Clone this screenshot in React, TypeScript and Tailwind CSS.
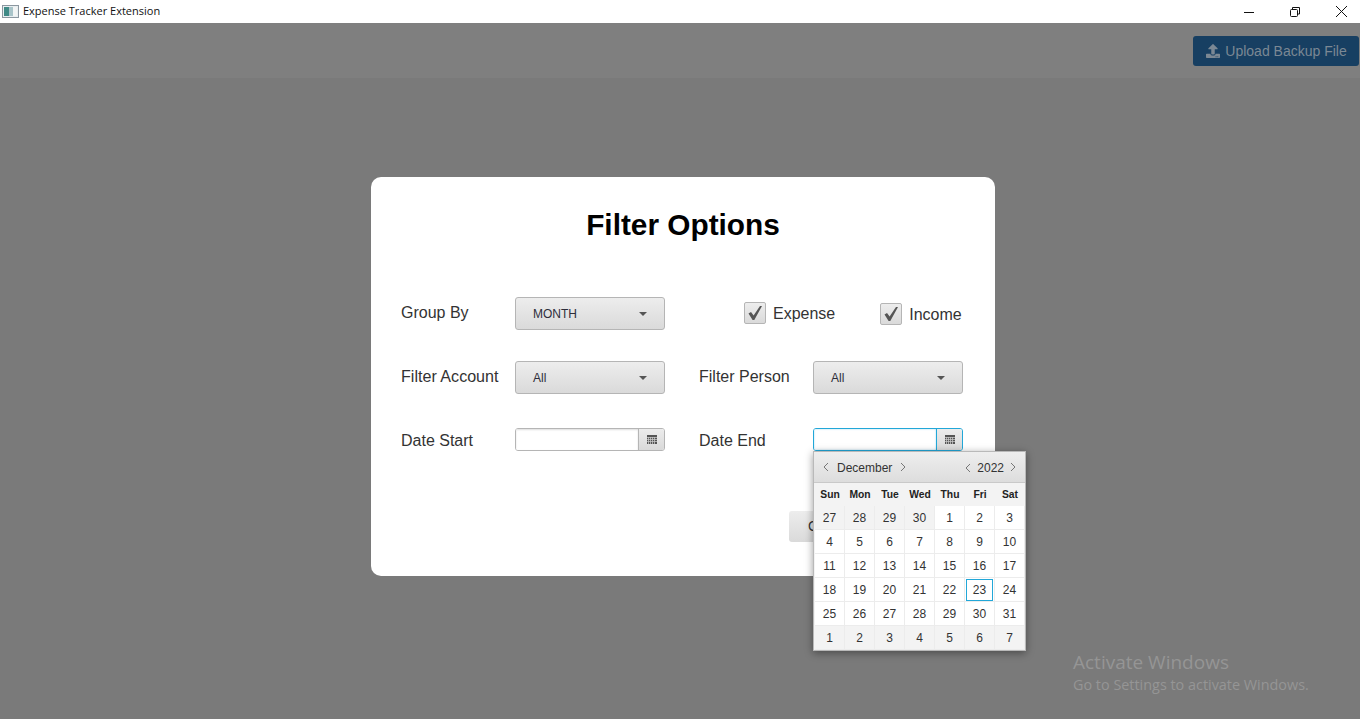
import { FaUpload } from "react-icons/fa";

const FONT = "font-['Liberation_Sans',Arial,sans-serif]";

function TitleBar() {
  return (
    <div className="flex h-[23px] items-center bg-white">
      <svg width="18" height="14" viewBox="0 0 18 14" className="ml-[2px]">
        <rect x="0.5" y="0.5" width="16" height="12" fill="#e8eef0" stroke="#8c97a0" />
        <rect x="2" y="2" width="5" height="9" fill="#3f8a86" />
        <rect x="7" y="2" width="4" height="9" fill="#a9c4c9" />
        <rect x="11" y="2" width="4" height="9" fill="#f2f4f4" />
      </svg>
      <span className="ml-[3px] font-['Open_Sans',sans-serif] text-[11px] text-[#111]">Expense Tracker Extension</span>
      <div className="ml-auto flex items-center">
        <svg width="12" height="12" viewBox="0 0 12 12" className="mr-[34px]"><path d="M1 6.5h10" stroke="#111" /></svg>
        <svg width="12" height="12" viewBox="0 0 12 12" className="mr-[34px]" fill="none" stroke="#111"><path d="M3.5 3V1.5h7V8H9" /><rect x="1.5" y="3.5" width="7" height="7" rx="1" /></svg>
        <svg width="13" height="13" viewBox="0 0 13 13" className="mr-[12px]"><path d="M1 1l11 11M12 1L1 12" stroke="#111" /></svg>
      </div>
    </div>
  );
}

function Select({ text }: { text: string }) {
  return (
    <div className="flex h-[33px] w-[150px] items-center rounded-[3px] border border-[#b5b5b5] bg-gradient-to-b from-[#ededed] to-[#dadada] pl-[17px] pr-[17px] text-[12px] text-[#2d2d3a]">
      <span>{text}</span>
      <span className="ml-auto h-0 w-0 border-x-[4px] border-t-[4px] border-x-transparent border-t-[#555]" />
    </div>
  );
}

function CalIcon() {
  return (
    <svg width="10" height="9" viewBox="0 0 10 9" shapeRendering="crispEdges">
      <rect width="10" height="9" fill="#555" />
      <path d="M0 2.5h10M0 4.5h10M0 6.5h10" stroke="#c8c8c8" strokeWidth="1" opacity="0.75" />
      <path d="M1.5 2v7M3.5 2v7M5.5 2v7M7.5 2v7" stroke="#c8c8c8" strokeWidth="1" opacity="0.75" />
    </svg>
  );
}

function DateField({ focused }: { focused?: boolean }) {
  return (
    <div className={`flex h-[23px] w-[150px] overflow-hidden rounded-[3px] border ${focused ? "border-[#22a7d8]" : "border-[#b5b5b5]"}`}>
      <div className={`flex-1 bg-white ${focused ? "shadow-[inset_0_0_2px_#9fd8ee]" : "shadow-[inset_0_1px_2px_#ddd]"}`} />
      <div className={`flex w-[26px] items-center justify-center border-l bg-gradient-to-b from-[#ececec] to-[#d9d9d9] ${focused ? "border-[#22a7d8]" : "border-[#b5b5b5]"}`}>
        <CalIcon />
      </div>
    </div>
  );
}

function Check({ label }: { label: string }) {
  return (
    <div className="flex items-center gap-[7px] text-[16px] text-[#333]">
      <div className="flex h-[22px] w-[22px] items-center justify-center rounded-[2px] border border-[#b5b5b5] bg-gradient-to-b from-[#ededed] to-[#dadada]">
        <svg width="16" height="16" viewBox="0 0 16 16" fill="#555"><path d="M1.5 8.5L4 7l2.6 3.6L13 1h2L7.3 15H5.6z" /></svg>
      </div>
      <span className="translate-y-[1px]">{label}</span>
    </div>
  );
}

const rows = [
  [27, 28, 29, 30, 1, 2, 3],
  [4, 5, 6, 7, 8, 9, 10],
  [11, 12, 13, 14, 15, 16, 17],
  [18, 19, 20, 21, 22, 23, 24],
  [25, 26, 27, 28, 29, 30, 31],
  [1, 2, 3, 4, 5, 6, 7],
];

function Calendar() {
  return (
    <div className="absolute left-[442px] top-[274px] w-[213px] border border-[#b9b9b9] bg-[#f3f3f3] shadow-[0_2px_8px_rgba(0,0,0,0.4)]">
      <div className="flex h-[31px] items-center border-b border-[#c9c9c9] bg-gradient-to-b from-[#eeeeee] to-[#dddddd] pl-[9px] pr-[9px] text-[12px] text-[#333]">
        <Chev d="M5 1L1 5l4 4" />
        <span className="ml-[8px] mr-[8px] translate-y-[1px]">December</span>
        <Chev d="M1 1l4 4-4 4" />
        <span className="ml-auto"><Chev d="M5 1L1 5l4 4" /></span>
        <span className="ml-[6px] mr-[6px] translate-y-[1px]">2022</span>
        <Chev d="M1 1l4 4-4 4" />
      </div>
      <div className="grid h-[23px] grid-cols-[repeat(7,30px)] items-center px-[1px] text-center text-[10.3px] font-bold text-[#222]">
        {["Sun", "Mon", "Tue", "Wed", "Thu", "Fri", "Sat"].map((d) => (
          <span key={d}>{d}</span>
        ))}
      </div>
      <div className="grid grid-cols-[repeat(7,30px)] px-[1px]">
        {rows.flatMap((r, i) =>
          r.map((n, j) => {
            const other = (i === 0 && j < 4) || i === 5;
            const today = i === 3 && j === 5;
            return (
              <div
                key={`${i}-${j}`}
                className={`flex h-[24px] items-center justify-center border-b border-r border-[#ececec] text-[12px] text-[#333] ${other ? "bg-[#f3f3f3]" : "bg-white"}`}
              >
                <span className={today ? "flex h-[22px] w-[27px] items-center justify-center border border-[#22a7d8]" : ""}>{n}</span>
              </div>
            );
          })
        )}
      </div>
    </div>
  );
}

function Chev({ d }: { d: string }) {
  return (
    <svg width="6" height="10" viewBox="0 0 6 10" fill="none" className="inline-block">
      <path d={d} stroke="#777" />
    </svg>
  );
}

export default function App() {
  return (
    <div className={`${FONT} flex h-[719px] w-[1360px] flex-col overflow-hidden bg-[#7a7a7a]`}>
      <TitleBar />
      <div className="flex h-[55px] items-start justify-end bg-[#7f7f7f] pr-[1px] pt-[13px]">
        <div className="flex h-[30px] w-[166px] items-center justify-center gap-[5px] rounded-[3px] bg-[#173f62] pl-[1px] text-[14px] text-[#7b8894]">
          <FaUpload className="h-[14px] w-[14px]" />
          <span>Upload Backup File</span>
        </div>
      </div>
      <div className="relative flex-1">
        <div className="relative ml-[371px] mt-[99px] h-[399px] w-[624px] rounded-[10px] bg-white">
          <h1 className="pt-[28px] text-center text-[29.8px] font-bold leading-[40px] text-black">Filter Options</h1>
          <div className="ml-[30px] mt-[52px] flex flex-col text-[16px] text-[#333]">
            <div className="flex h-[33px] items-center">
              <span className="w-[114px] pb-[2px]">Group By</span>
              <Select text="MONTH" />
              <div className="ml-[79px] pb-[1px]"><Check label="Expense" /></div>
              <div className="ml-[45px] pt-[1px]"><Check label="Income" /></div>
            </div>
            <div className="mt-[31px] flex h-[33px] items-center">
              <span className="w-[114px] pb-[2px] text-[16.1px]">Filter Account</span>
              <Select text="All" />
              <span className="ml-[34px] w-[114px] pb-[2px]">Filter Person</span>
              <Select text="All" />
            </div>
            <div className="mt-[34px] flex h-[23px] items-center">
              <span className="w-[114px] pt-[2px]">Date Start</span>
              <DateField />
              <span className="ml-[34px] w-[114px] pt-[2px]">Date End</span>
              <DateField focused />
            </div>
          </div>
          <div className="ml-[418px] mt-[60px] flex h-[31px] w-[60px] items-center rounded-[3px] bg-gradient-to-b from-[#ededed] to-[#dadada] pl-[19px] text-[14px] text-[#333]">Cancel</div>
          <Calendar />
        </div>
        <div className="absolute left-[1073px] top-[571px] font-['Open_Sans',sans-serif] text-[#959595]">
          <div className="text-[19px] leading-[26px]">Activate Windows</div>
          <div className="mt-[-1px] text-[14.4px] leading-[22px]">Go to Settings to activate Windows.</div>
        </div>
      </div>
    </div>
  );
}
